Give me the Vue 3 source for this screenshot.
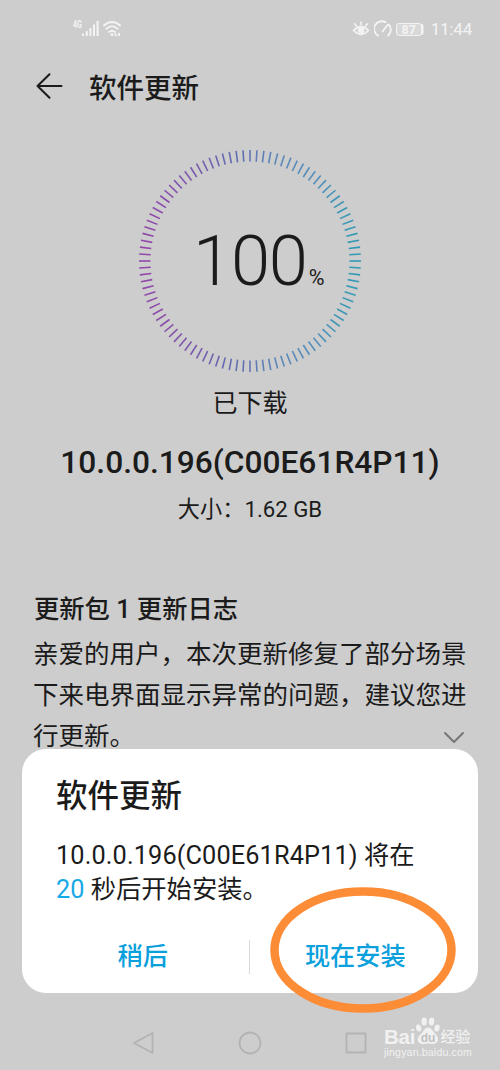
<script setup>
const cx = 112
const mix = (a, b, t) => a.map((v, i) => Math.round(v + (b[i] - v) * t))
const stops = [[146, 72, 170], [126, 88, 172], [100, 106, 176], [94, 132, 184], [86, 142, 186], [50, 154, 180]]
const colourAt = (x) => {
  const p = Math.min(4.999, ((x + 1) / 2) * 5)
  const i = Math.floor(p)
  return `rgb(${mix(stops[i], stops[i + 1], p - i).join(',')})`
}
const ticks = Array.from({ length: 100 }, (_, i) => {
  const a = (i / 100) * Math.PI * 2
  const x = Math.cos(a)
  const y = Math.sin(a)
  return {
    x1: cx + x * 99.5, y1: cx + y * 99.5,
    x2: cx + x * 111, y2: cx + y * 111,
    colour: colourAt(x),
  }
})
const log = ['亲爱的用户，本次更新修复了部分场景', '下来电界面显示异常的问题，建议您进', '行更新。']
</script>

<template>
  <div class="phone">
    <header class="status">
      <svg class="signals" width="52" height="20" viewBox="0 0 52 20">
        <text x="0" y="8.500" class="net" textLength="9" lengthAdjust="spacingAndGlyphs">4G</text>
        <g fill="#f3f3f3">
          <rect x="9" y="14.500" width="2" height="2.500" /><rect x="12.800" y="12" width="2" height="5" />
          <rect x="16.400" y="9" width="2" height="8" /><rect x="20" y="5.500" width="2" height="11.500" />
          <rect x="23.500" y="2" width="2.200" height="15" />
        </g>
        <g fill="none" stroke="#f3f3f3" stroke-width="1.900" stroke-linecap="round">
          <path d="M31 6.500Q39 -.5 47 6.500M33.500 9.800Q39 4.800 44.500 9.800M36 13Q39 10.400 42 13" />
        </g>
        <circle cx="39" cy="15.500" r="1.500" fill="#f3f3f3" />
        <path d="M42.700 17v-2.500M46 17v-3" stroke="#f3f3f3" stroke-width="2" />
      </svg>
      <div class="status-right">
        <svg width="18" height="18" viewBox="0 0 18 18" fill="none" stroke="#f3f3f3" stroke-width="1.700" stroke-linecap="round">
          <path d="M1.500 10.500Q9 3 16.500 10.500Q9 18 1.500 10.500Z" /><circle cx="9" cy="10.300" r="2.500" fill="#f3f3f3" />
          <path d="M9 4.500V2M4.500 6L2.500 3.800M13.500 6l2-2.200" />
        </svg>
        <svg width="18" height="18" viewBox="0 0 18 18" fill="none" stroke="#f3f3f3" stroke-width="1.900" stroke-linecap="round">
          <path d="M4 15.500A7.600 7.600 0 0 1 11.500 2.200M14.800 4.500A7.600 7.600 0 0 1 14 15.500M8.500 11.500L13.500 5" />
        </svg>
        <div class="battery"><span>87</span></div>
        <span class="clock">11:44</span>
      </div>
    </header>

    <div class="bar">
      <svg class="back" width="28" height="28" viewBox="0 0 28 28" fill="none" stroke="#1b1b1b" stroke-width="2" stroke-linecap="round" stroke-linejoin="round">
        <path d="M26.500 14H2.500M14.500 2.200L2.500 14l12 11.800" />
      </svg>
      <h1>软件更新</h1>
    </div>

    <main>
      <div class="dial">
        <svg width="224" height="224" viewBox="0 0 224 224">
          <line v-for="(t, i) in ticks" :key="i" :x1="t.x1" :y1="t.y1" :x2="t.x2" :y2="t.y2" :stroke="t.colour" stroke-width="1.600" />
        </svg>
        <div class="value"><span class="number">100</span><span class="percent">%</span></div>
      </div>
      <p class="state">已下载</p>
      <p class="version">10.0.0.196(C00E61R4P11)</p>
      <p class="size">大小：<span>1.62 GB</span></p>
      <h2>更新包 1 更新日志</h2>
      <div class="log">
        <p v-for="line in log" :key="line">{{ line }}</p>
        <svg class="chevron" width="22" height="14" viewBox="0 0 22 14" fill="none" stroke="#777" stroke-width="2" stroke-linecap="round" stroke-linejoin="round"><path d="M2 2l9 9 9-9" /></svg>
      </div>
    </main>

    <nav>
      <svg width="240" height="26" viewBox="0 0 240 26" fill="none" stroke="#b3b3b3" stroke-width="1.800" stroke-linejoin="round">
        <path d="M22.500 3v20L4 13z" /><circle cx="120" cy="13" r="10.500" /><rect x="216.500" y="3.500" width="19" height="19" />
      </svg>
    </nav>

    <section class="sheet">
      <h3>软件更新</h3>
      <p class="message"><span class="ver">10.0.0.196(C00E61R4P11)</span> 将在<br><b>20</b> 秒后开始安装。</p>
      <div class="actions">
        <button>稍后</button><i></i><button>现在安装</button>
      </div>
    </section>

    <svg class="ring" width="190" height="132" viewBox="0 0 190 132"><ellipse cx="95" cy="66" rx="88.500" ry="58.500" fill="none" stroke="#fd8c37" stroke-width="8.500" /></svg>

    <div class="mark">
      <div class="brand">
        <span class="bai">Bai</span>
        <svg width="26" height="29" viewBox="0 0 26 29">
          <g fill="#f1f1f1">
            <ellipse cx="3.700" cy="12" rx="2.600" ry="3.600" transform="rotate(-15 3.700 12)" /><ellipse cx="9.200" cy="5.500" rx="2.700" ry="4" />
            <ellipse cx="16.500" cy="5.500" rx="2.700" ry="4" transform="rotate(8 16.500 5.500)" /><ellipse cx="22" cy="12" rx="2.600" ry="3.600" transform="rotate(15 22 12)" />
            <path d="M13 11.500C16.500 11.500 17.500 15 20 17.500C23 20.300 24 23.500 22 26C19.500 29 16.500 27.500 13 27.500S5.500 29 3.500 26C1.800 23 3.500 20 6.500 17.500C9 15 9.500 11.500 13 11.500Z" />
          </g>
          <text x="13" y="25.500" text-anchor="middle" class="du">du</text>
        </svg>
        <span class="jy">经验</span>
      </div>
      <div class="site">jingyan.baidu.com</div>
    </div>
  </div>
</template>

<style>
body { background: #cdcdcd; }
</style>

<style scoped>
.phone {
  position: relative; width: 500px; height: 1070px; overflow: hidden;
  display: flex; flex-direction: column; background: #cdcdcd; color: #1b1b1b;
  font-family: Roboto, "Noto Sans CJK SC", sans-serif;
}
p, h1, h2, h3 { margin: 0; white-space: nowrap; }
.status { height: 58px; padding: 0 28px 0 73px; display: flex; justify-content: space-between; align-items: center; color: #f3f3f3; }
.net { font-size: 10px; font-weight: 700; fill: #f3f3f3; }
.status-right { display: flex; align-items: center; gap: 4px; }
.battery { width: 26px; height: 13px; box-sizing: border-box; border: 1px solid #f3f3f3; border-radius: 3px; background: #d8d8d8; margin-right: 5px; font-size: 12.500px; line-height: 12px; text-align: center; font-weight: 700; box-shadow: 2.500px 0 0 -1px #f3f3f3; }
.clock { font-size: 17px; line-height: 20px; letter-spacing: -.2px; }
.bar { height: 60px; padding-left: 35px; display: flex; align-items: center; gap: 26px; }
.back { margin-bottom: 4px; }
h1 { font-size: 27.500px; font-weight: 500; line-height: 40px; margin-top: 2px; }
main { display: flex; flex-direction: column; align-items: center; padding-top: 31px; }
.dial { display: grid; width: 224px; height: 224px; }
.dial > * { grid-area: 1 / 1; }
.value { display: flex; align-items: baseline; padding: 70px 0 0 55px; }
.number { font-size: 70.500px; line-height: 84px; font-weight: 300; letter-spacing: -1.200px; }
.percent { font-size: 21.500px; margin-left: 2px; }
.state { margin-top: 11px; font-size: 25px; line-height: 40px; }
.version { margin-top: 19px; font-size: 31.700px; font-weight: 500; line-height: 40px; }
.size { margin-top: 11px; font-size: 22.200px; line-height: 30px; }
h2 { align-self: flex-start; margin: 66px 0 0 34px; font-size: 25.300px; font-weight: 500; line-height: 40px; }
.log { position: relative; align-self: stretch; padding: 4px 0 0 33px; font-size: 25.500px; line-height: 41px; }
.chevron { position: absolute; right: 35px; bottom: 12px; }
nav { display: flex; justify-content: center; margin-top: auto; padding-bottom: 14px; }
.sheet { position: absolute; left: 22px; top: 749px; width: 456px; height: 244px; box-sizing: border-box; border-radius: 24px; background: #fff; padding: 28px 20px 0 34px; }
h3 { font-size: 31.500px; font-weight: 500; line-height: 40px; }
.message { margin-top: 22px; font-size: 25.300px; line-height: 34px; }
.ver { letter-spacing: .12px; }
.message b { font-weight: 400; color: #17a9e6; }
.actions { display: flex; align-items: center; margin: 31px -3px 0 -19px; }
.actions i { width: 1px; height: 34px; background: #d9d9d9; }
button { flex: 1; border: 0; padding: 0; background: none; color: #0aa0dc; font: inherit; font-size: 25.200px; font-weight: 500; line-height: 38px; }
.ring { position: absolute; left: 268px; top: 884px; }
.mark { position: absolute; left: 384px; top: 1016px; color: #f1f1f1; }
.brand { display: flex; align-items: flex-end; height: 29px; }
.bai { font: 700 20.500px/17px "Liberation Sans", sans-serif; width: 30.500px; letter-spacing: -.2px; height: 17px; }
.du { font: 700 12px "Liberation Sans", sans-serif; fill: #c0c0c0; }
.jy { font-size: 15px; font-weight: 500; line-height: 16px; }
.site { font: 10.500px/13px "Liberation Sans", sans-serif; letter-spacing: .2px; padding-top: 1px; }
</style>
